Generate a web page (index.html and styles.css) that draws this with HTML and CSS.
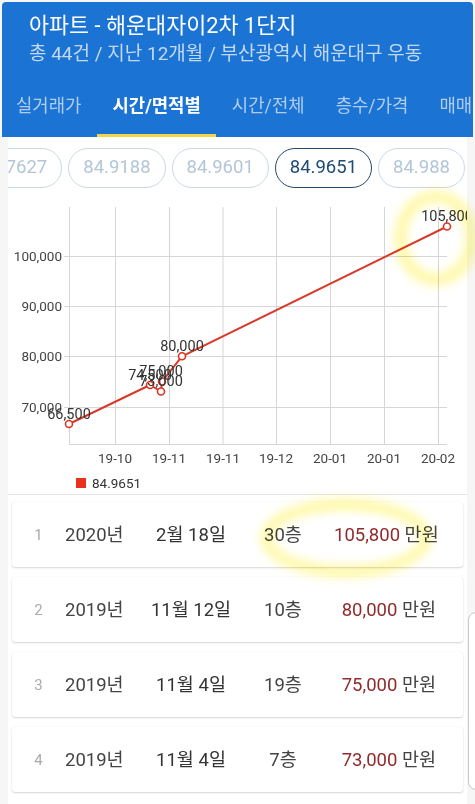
FILE: index.html
```html
<!DOCTYPE html>
<html lang="ko">
<head>
<meta charset="utf-8">
<title>아파트 - 해운대자이2차 1단지</title>
<link rel="stylesheet" href="styles.css">
</head>
<body>
<header class="header">
  <div class="title">아파트 - 해운대자이2차 1단지</div>
  <div class="subtitle">총 44건 / 지난 12개월 / 부산광역시 해운대구 우동</div>
  <nav class="tabs">
    <div class="tab">실거래가</div>
    <div class="tab active">시간/면적별</div>
    <div class="tab">시간/전체</div>
    <div class="tab">층수/가격</div>
    <div class="tab">매매</div>
  </nav>
</header>
<div class="content">
  <main class="main">
    <div class="chips">
      <div class="chip first">84.7627</div>
      <div class="chip">84.9188</div>
      <div class="chip">84.9601</div>
      <div class="chip active">84.9651</div>
      <div class="chip">84.988</div>
    </div>
    <div class="chart">
      <svg width="459" height="299" viewBox="8 195 459 299" xmlns="http://www.w3.org/2000/svg">
        <g class="grid" stroke="#d6d6d6" stroke-width="1">
          <line x1="69.5" y1="207" x2="69.5" y2="445"/>
          <line x1="115.5" y1="207" x2="115.5" y2="445"/>
          <line x1="169.5" y1="207" x2="169.5" y2="445"/>
          <line x1="223" y1="207" x2="223" y2="445"/>
          <line x1="276.5" y1="207" x2="276.5" y2="445"/>
          <line x1="330.5" y1="207" x2="330.5" y2="445"/>
          <line x1="384.5" y1="207" x2="384.5" y2="445"/>
          <line x1="438.5" y1="207" x2="438.5" y2="445"/>
          <line x1="64" y1="256.5" x2="447" y2="256.5"/>
          <line x1="64" y1="306.5" x2="447" y2="306.5"/>
          <line x1="64" y1="356.5" x2="447" y2="356.5"/>
          <line x1="64" y1="407.5" x2="447" y2="407.5"/>
          <line x1="69" y1="444.5" x2="447" y2="444.5"/>
        </g>
        <g class="ylabels" font-size="13.5" fill="#444" text-anchor="end">
          <text x="62" y="261">100,000</text>
          <text x="62" y="311">90,000</text>
          <text x="62" y="361">80,000</text>
          <text x="62" y="412">70,000</text>
        </g>
        <g class="xlabels" font-size="13.5" fill="#444" text-anchor="middle">
          <text x="115" y="463">19-10</text>
          <text x="169" y="463">19-11</text>
          <text x="223" y="463">19-11</text>
          <text x="276" y="463">19-12</text>
          <text x="330" y="463">20-01</text>
          <text x="384" y="463">20-01</text>
          <text x="438" y="463">20-02</text>
        </g>
        <polyline points="69,424 150,385 161,391.5 162,381.5 182,356.3 447,226.5" fill="none" stroke="#d9392a" stroke-width="2" stroke-linejoin="round"/>
        <g fill="#fff" stroke="#e0341f" stroke-width="1.6">
          <circle cx="69" cy="424" r="3.5"/>
          <circle cx="150" cy="385" r="3.5"/>
          <circle cx="161" cy="391.5" r="3.5"/>
          <circle cx="162" cy="381.5" r="3.5"/>
          <circle cx="182" cy="356.3" r="3.5"/>
          <circle cx="447" cy="226.5" r="3.5"/>
        </g>
        <g class="dlabels" font-size="14.5" fill="#333" text-anchor="middle">
          <text x="69" y="419">66,500</text>
          <text x="150" y="380">74,500</text>
          <text x="161" y="376">75,000</text>
          <text x="161" y="386">73,000</text>
          <text x="182" y="351">80,000</text>
          <text x="447" y="221">105,800</text>
        </g>
        <rect x="76" y="478" width="10" height="10" fill="#e8311f"/>
        <text x="92" y="488" font-size="13.5" fill="#333">84.9651</text>
      </svg>
    </div>
    <div class="list">
      <div class="card">
        <span class="idx">1</span><span class="year">2020년</span><span class="date">2월 18일</span><span class="floor">30층</span><span class="price"><b>105,800</b> 만원</span>
      </div>
      <div class="card">
        <span class="idx">2</span><span class="year">2019년</span><span class="date">11월 12일</span><span class="floor">10층</span><span class="price"><b>80,000</b> 만원</span>
      </div>
      <div class="card">
        <span class="idx">3</span><span class="year">2019년</span><span class="date">11월 4일</span><span class="floor">19층</span><span class="price"><b>75,000</b> 만원</span>
      </div>
      <div class="card">
        <span class="idx">4</span><span class="year">2019년</span><span class="date">11월 4일</span><span class="floor">7층</span><span class="price"><b>73,000</b> 만원</span>
      </div>
    </div>
  </main>
  <aside class="side"><div class="sliver"></div></aside>
</div>
<div class="mark mark-chart"></div>
<div class="mark mark-row"></div>
</body>
</html>
```
FILE: styles.css
```css
* { box-sizing: border-box; }
html, body { margin: 0; padding: 0; }
body {
  width: 475px;
  height: 804px;
  overflow: hidden;
  position: relative;
  background: #f6f6f6;
  font-family: Roboto, "Noto Sans CJK KR", sans-serif;
  color: #333;
}
.header {
  margin: 2px 2px 0 2px;
  height: 135px;
  background: #1b74d4;
  border-radius: 4px 4px 0 0;
  overflow: hidden;
  color: #fff;
}
.title {
  padding: 10px 0 0 27px;
  font-size: 21.8px;
  line-height: 28px;
  white-space: nowrap;
}
.subtitle {
  margin-top: 2px;
  padding-left: 27px;
  font-size: 19px;
  line-height: 24px;
  color: #c3d9f3;
  white-space: nowrap;
}
.tabs {
  margin-top: 28px;
  margin-left: -2px;
  display: flex;
  height: 43px;
  white-space: nowrap;
  overflow: hidden;
}
.tab {
  flex-shrink: 0;
  padding: 0 15.5px;
  height: 43px;
  font-size: 17.8px;
  line-height: 24px;
  color: #b0cdf0;
  border-bottom: 3px solid transparent;
}
.tab:first-child { padding-left: 16px; }
.tab.active {
  color: #fff;
  font-weight: 700;
  border-bottom-color: #f1d54a;
}
.content {
  display: flex;
  align-items: flex-start;
}
.main {
  margin-left: 8px;
  width: 459px;
  flex-shrink: 0;
  background: #fff;
}
.chips {
  display: flex;
  gap: 6px;
  padding: 11px 0 7px 0;
  overflow: hidden;
}
.chip {
  flex-shrink: 0;
  height: 40px;
  padding: 0 14px;
  border: 1.5px solid #c9d9e6;
  border-radius: 20px;
  font-size: 18.5px;
  line-height: 37px;
  color: #b3c6d8;
}
.chip.first { margin-left: -43px; }
.chip.active {
  border-color: #27486a;
  color: #1e4b75;
}
.chart {
  height: 300px;
  border-bottom: 1px solid #e4e4e4;
  overflow: hidden;
}
.chart svg { display: block; font-family: Roboto, sans-serif; }
.list {
  display: flex;
  flex-direction: column;
  gap: 10px;
  padding: 7px 4px 12px 4px;
}
.card {
  height: 65px;
  display: grid;
  grid-template-columns: 53px 85px 82px 102px 102px;
  align-items: center;
  background: #fff;
  border-radius: 3px;
  box-shadow: 0 1px 2px rgba(0,0,0,0.16), 0 0 1px rgba(0,0,0,0.10);
  font-size: 18.5px;
  line-height: 24px;
  color: #444;
  white-space: nowrap;
}
.idx { text-align: center; font-size: 15px; color: #aaa; }
.year { text-align: left; color: #444; }
.date { text-align: center; color: #333; }
.floor { text-align: center; color: #444; }
.price { text-align: right; color: #444; }
.price b { font-weight: 400; color: #912a2a; }
.side {
  flex-shrink: 0;
  width: 8px;
  overflow: hidden;
}
.sliver {
  margin: 475px 0 0 1px;
  width: 20px;
  height: 178px;
  background: #fff;
  border: 1px solid #c8c8c8;
  border-radius: 8px;
}
.mark {
  position: absolute;
  border-radius: 50%;
  border: 13px solid rgba(255, 238, 40, 0.38);
  filter: blur(5px);
  mix-blend-mode: multiply;
  pointer-events: none;
}
.mark-chart {
  left: 394px;
  top: 190px;
  width: 84px;
  height: 96px;
}
.mark-row {
  left: 260px;
  top: 498px;
  width: 172px;
  height: 80px;
}
```
